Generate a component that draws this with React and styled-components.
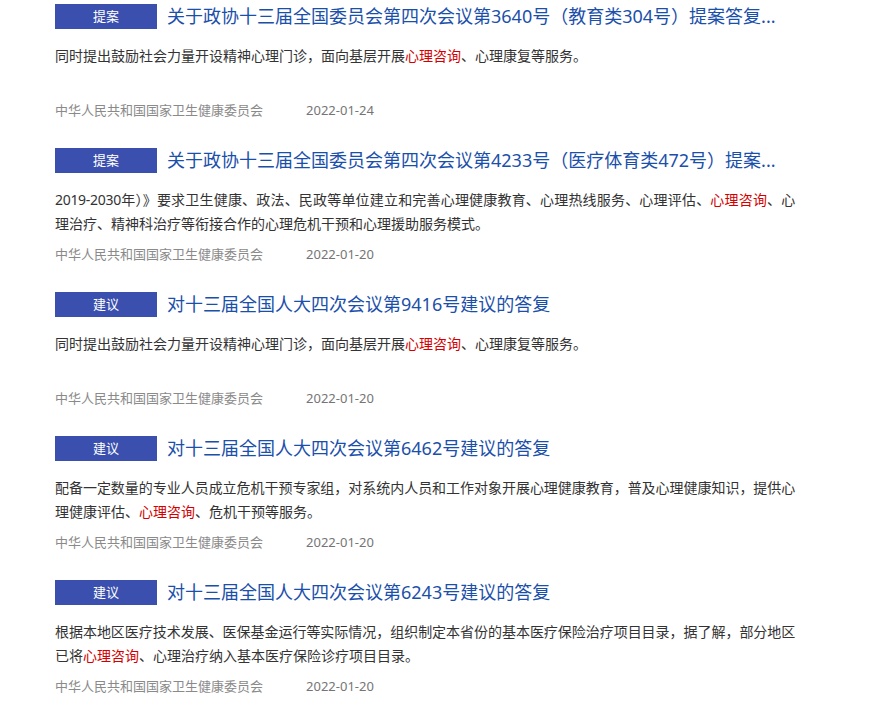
import React from 'react';
import styled, { createGlobalStyle } from 'styled-components';

const GlobalStyle = createGlobalStyle`
  body {
    margin: 0;
    background: #fff;
    font-family: "Noto Sans", "Noto Sans CJK SC", sans-serif;
  }
`;

const List = styled.div`
  padding: 3px 0 0 55px;
  width: 740px;
`;

const Item = styled.div`
  height: 144px;
`;

const Head = styled.div`
  display: flex;
  align-items: center;
  height: 26px;
  margin-bottom: 15px;
`;

const Tag = styled.span`
  flex: none;
  width: 102px;
  height: 25px;
  background-color: #3a4fae;
  color: #fff;
  font-size: 13px;
  line-height: 25px;
  text-align: center;
  margin-right: 10px;
`;

const Title = styled.a`
  font-size: 18px;
  color: #1b50aa;
  text-decoration: none;
  white-space: nowrap;
  line-height: 26px;
`;

const Summary = styled.div`
  height: 48px;
  margin-bottom: 6px;
  font-size: 14px;
  line-height: 24px;
  color: #333;
`;

// every line but the last is stretched to the full column width
const Line = styled.div`
  white-space: nowrap;
  letter-spacing: ${(p) => (p.$fill ? '-0.3px' : '0')};
  text-align: justify;
  text-align-last: ${(p) => (p.$fill ? 'justify' : 'left')};
`;

const Hit = styled.span`
  color: #d40000;
`;

const Meta = styled.div`
  display: flex;
  gap: 43px;
  font-size: 13px;
  line-height: 24px;
  color: #8a8a8a;
`;

const Date = styled.span`
  color: #757575;
`;

const KEY = '心理咨询';

const items = [
  {
    tag: '提案',
    title: '关于政协十三届全国委员会第四次会议第3640号（教育类304号）提案答复...',
    lines: ['同时提出鼓励社会力量开设精神心理门诊，面向基层开展心理咨询、心理康复等服务。'],
    date: '2022-01-24',
  },
  {
    tag: '提案',
    title: '关于政协十三届全国委员会第四次会议第4233号（医疗体育类472号）提案...',
    lines: [
      '2019-2030年）》要求卫生健康、政法、民政等单位建立和完善心理健康教育、心理热线服务、心理评估、心理咨询、心',
      '理治疗、精神科治疗等衔接合作的心理危机干预和心理援助服务模式。',
    ],
    date: '2022-01-20',
  },
  {
    tag: '建议',
    title: '对十三届全国人大四次会议第9416号建议的答复',
    lines: ['同时提出鼓励社会力量开设精神心理门诊，面向基层开展心理咨询、心理康复等服务。'],
    date: '2022-01-20',
  },
  {
    tag: '建议',
    title: '对十三届全国人大四次会议第6462号建议的答复',
    lines: [
      '配备一定数量的专业人员成立危机干预专家组，对系统内人员和工作对象开展心理健康教育，普及心理健康知识，提供心',
      '理健康评估、心理咨询、危机干预等服务。',
    ],
    date: '2022-01-20',
  },
  {
    tag: '建议',
    title: '对十三届全国人大四次会议第6243号建议的答复',
    lines: [
      '根据本地区医疗技术发展、医保基金运行等实际情况，组织制定本省份的基本医疗保险治疗项目目录，据了解，部分地区',
      '已将心理咨询、心理治疗纳入基本医疗保险诊疗项目目录。',
    ],
    date: '2022-01-20',
  },
];

// highlight the search keyword inside a line
const mark = (text) =>
  text.split(KEY).flatMap((part, i) => (i === 0 ? [part] : [<Hit key={i}>{KEY}</Hit>, part]));

export default function App() {
  return (
    <>
      <GlobalStyle />
      <List>
        {items.map((item, index) => (
          <Item key={index}>
            <Head>
              <Tag>{item.tag}</Tag>
              <Title href="#">{item.title}</Title>
            </Head>
            <Summary>
              {item.lines.map((line, i) => (
                <Line key={i} $fill={i < item.lines.length - 1}>
                  {mark(line)}
                </Line>
              ))}
            </Summary>
            <Meta>
              <span>中华人民共和国国家卫生健康委员会</span>
              <Date>{item.date}</Date>
            </Meta>
          </Item>
        ))}
      </List>
    </>
  );
}
